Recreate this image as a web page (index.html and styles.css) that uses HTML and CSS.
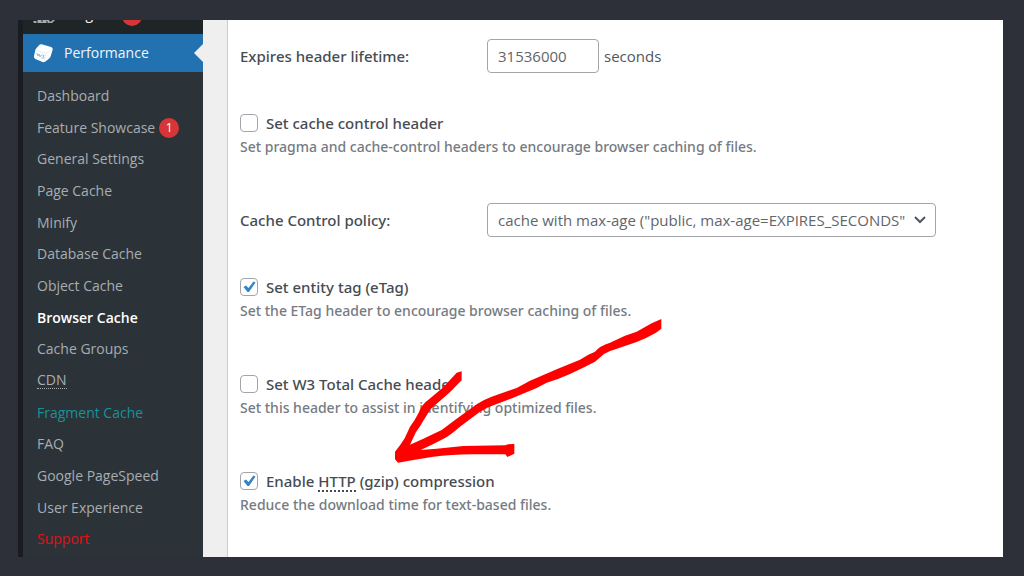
FILE: index.html
```html
<!DOCTYPE html>
<html lang="en">
<head>
  <meta charset="UTF-8">
  <meta name="viewport" content="width=device-width, initial-scale=1.0">
  <title>Browser Cache</title>
  <link rel="stylesheet" href="styles.css">
</head>
<body>
  <div class="frame">
    <nav class="sidebar">
      <a href="#" class="menu-top menu-plugins">
        <svg class="plugin-icon" viewBox="0 0 22 4" aria-hidden="true">
          <path d="M0 1h4l1-1h11l1 2 3-2 2 0-3 3H1z" fill="#a7aaad"/>
          <path d="M3 2h2M8 1h2M13 2h2" stroke="#202427" stroke-width="1"/>
        </svg>
        <span class="menu-name">Plugins</span>
        <span class="count"></span>
      </a>
      <a href="#" class="menu-top menu-current">
        <svg class="cube-icon" viewBox="0 0 22 22" aria-hidden="true">
          <path d="M6.500 2.200Q7.500 1 9 1.300L19 4.200Q21 5 20.600 7L18.500 14Q18 15.500 17 16.300L13 19.500Q11.500 20.600 10 20L2.500 16.800Q.6 16 1 14L2.400 7.500Q2.600 6.500 3.300 5.700z" fill="#fff"/>
          <path d="M3 7.300L13.500 11.200L20 6.500M13.500 11.200L11.800 19.500" fill="none" stroke="#e6edf3" stroke-width="1"/>
          <path d="M4 10.500l1 3 1.400-2 1 3 1.500-2M9.800 12.500l1.800.8-1.200 1.200 1 .6-.8 1-1.700-.5" fill="none" stroke="#7fb2d8" stroke-width="1"/>
        </svg>
        <span class="menu-name">Performance</span>
      </a>
      <ul class="submenu">
        <li><a href="#">Dashboard</a></li>
        <li><a href="#">Feature Showcase</a><span class="count">1</span></li>
        <li><a href="#">General Settings</a></li>
        <li><a href="#">Page Cache</a></li>
        <li><a href="#">Minify</a></li>
        <li><a href="#">Database Cache</a></li>
        <li><a href="#">Object Cache</a></li>
        <li><a href="#" class="current">Browser Cache</a></li>
        <li><a href="#">Cache Groups</a></li>
        <li><a href="#"><abbr>CDN</abbr></a></li>
        <li><a href="#" class="fragment">Fragment Cache</a></li>
        <li><a href="#">FAQ</a></li>
        <li><a href="#">Google PageSpeed</a></li>
        <li><a href="#">User Experience</a></li>
        <li><a href="#" class="support">Support</a></li>
      </ul>
    </nav>

    <main class="content">
      <form class="panel">
        <div class="field">
          <label for="lifetime">Expires header lifetime:</label>
          <div class="control">
            <input type="text" id="lifetime" value="31536000">
            <span>seconds</span>
          </div>
        </div>

        <div class="option">
          <label><input type="checkbox"> <span>Set cache control header</span></label>
          <p>Set pragma and cache-control headers to encourage browser caching of files.</p>
        </div>

        <div class="field">
          <label for="policy">Cache Control policy:</label>
          <div class="control">
            <select id="policy">
              <option>cache with max-age ("public, max-age=EXPIRES_SECONDS")</option>
            </select>
          </div>
        </div>

        <div class="option">
          <label><input type="checkbox" checked> <span>Set entity tag (eTag)</span></label>
          <p>Set the ETag header to encourage browser caching of files.</p>
        </div>

        <div class="option">
          <label><input type="checkbox"> <span>Set W3 Total Cache header</span></label>
          <p>Set this header to assist in identifying optimized files.</p>
        </div>

        <div class="option">
          <label><input type="checkbox" checked> <span>Enable <abbr>HTTP</abbr> (gzip) compression</span></label>
          <p>Reduce the download time for text-based files.</p>
        </div>

        <!-- hand drawn arrow over the options -->
        <svg class="arrow" viewBox="0 0 900 540" aria-hidden="true">
          <path d="M844 57L844 86L828 98Q800 114 770 126L715 145Q690 152 672 162L645 185Q610 203 570 222Q535 238 500 248L470 264Q430 281 400 293L325 322Q300 334 280 350L240 380Q215 402 195 414Q160 433 122 450L170 446L250 438L376 436Q384 431 403 432L403 461L382 471L376 463L280 463Q210 464 160 470L100 480L54 488L45 478L45 455Q60 438 74 415L90 380Q104 362 116 338Q126 312 148 297L190 262L230 218L245 214L245 241L208 278L152 327L130 362Q120 380 108 396L90 434L130 416L185 390L230 356L290 313Q310 299 335 290L410 264L450 242L485 227L530 208L600 179L625 164L645 155Q660 137 690 128L735 107L770 95L815 70Z" fill="#fe0000"/>
        </svg>
      </form>
    </main>
  </div>
</body>
</html>
```
FILE: styles.css
```css
* {
  box-sizing: border-box;
}

body {
  margin: 0;
  background: #2d3038;
  color: #50575e;
  font: 14px/24px "Open Sans", "Noto Sans", sans-serif;
}

.frame {
  display: flex;
  min-height: 100vh;
  padding: 20px 21px 19px 18px;
}

a {
  color: inherit;
  text-decoration: none;
}

abbr {
  border-bottom: 1px dotted currentColor;
}

/* sidebar */
.sidebar {
  display: flex;
  flex-direction: column;
  flex: 0 0 185px;
  border-left: 5px solid #191c20;
  background: #2c3338;
  color: #a7adb1;
}

.menu-top {
  display: flex;
  align-items: center;
  gap: 10px;
  padding-left: 10px;
  color: #f0f6fc;
}

.menu-plugins {
  align-items: flex-end;
  height: 14px;
  overflow: hidden;
  background: #1f2427;
}

.menu-plugins .menu-name,
.menu-plugins .count {
  margin-bottom: 8px;
}

.plugin-icon {
  align-self: flex-start;
  width: 22px;
  height: 4px;
}

.menu-current {
  position: relative;
  height: 38px;
  background: #2271b1;
}

.menu-current::after {
  content: "";
  position: absolute;
  top: 10px;
  right: 0;
  border: 9px solid transparent;
  border-left: 0;
  border-right-color: #efefef;
}

.cube-icon {
  width: 21px;
  height: 21px;
}

.submenu {
  display: flex;
  flex: 1;
  flex-direction: column;
  margin: 0;
  padding: 8px 0 2px 14px;
  list-style: none;
}

.submenu li {
  display: flex;
  flex: 1;
  align-items: center;
  gap: 4px;
}

.submenu abbr {
  display: block;
  line-height: 16px;
}

.submenu .current {
  color: #fff;
  font-weight: 600;
}

.submenu .fragment {
  color: #179297;
}

.submenu .support {
  color: #e30f14;
}

.count {
  width: 20px;
  height: 20px;
  border-radius: 50%;
  background: #d63638;
  color: #fff;
  font-size: 12px;
  line-height: 20px;
  text-align: center;
}

/* settings */
.content {
  flex: 1;
  padding-left: 24px;
  background: #efefef;
}

.panel {
  position: relative;
  display: flex;
  flex-direction: column;
  gap: 38px;
  height: 100%;
  padding: 19px 24px 0 12px;
  border-left: 1px solid #c9cbce;
  background: #fff;
  font-size: 15px;
}

.field {
  display: flex;
  align-items: center;
}

.field > label,
.option label {
  color: #464c53;
  font-family: "Noto Sans", sans-serif;
  font-weight: 500;
}

.field > label {
  flex: 0 0 247px;
}

.option + .field {
  margin-top: 6px;
}

.option + .option {
  margin-top: 11px;
}

.control {
  display: flex;
  align-items: center;
  gap: 5px;
}

.control input,
.control select {
  height: 34px;
  padding: 0 10px;
  border: 1px solid #a3a5aa;
  border-radius: 4px;
  background: #fff;
  color: #5f666c;
  font: inherit;
}

.control input {
  width: 112px;
}

.control select {
  width: 449px;
  padding-right: 30px;
  appearance: none;
  background: #fff url("data:image/svg+xml,%3Csvg xmlns='http://www.w3.org/2000/svg' viewBox='0 0 12 8'%3E%3Cpath d='M1 1l5 5 5-5' fill='none' stroke='%2350575e' stroke-width='2'/%3E%3C/svg%3E") no-repeat right 9px center / 12px 8px;
}

.option label {
  display: flex;
  align-items: center;
  gap: 8px;
}

.option abbr {
  display: inline-block;
  line-height: 18px;
  border-bottom-width: 2px;
}

.option input {
  width: 18px;
  height: 18px;
  margin: 0;
  appearance: none;
  border: 1px solid #a3a5aa;
  border-radius: 4px;
  background: #fff;
}

.option input:checked {
  background: #fff url("data:image/svg+xml,%3Csvg xmlns='http://www.w3.org/2000/svg' viewBox='0 0 14 14'%3E%3Cpath d='M1.500 7l2.500-1.500 2.500 2.500L11.500 1.500l2 1L7 12H5.500z' fill='%233582c4'/%3E%3C/svg%3E") no-repeat center / 14px 14px;
}

.option p {
  margin: 0;
  color: #757b82;
  font-family: "Noto Sans", sans-serif;
  font-size: 14px;
  font-weight: 500;
}

.arrow {
  position: absolute;
  top: 280px;
  left: 152px;
  width: 300px;
  height: 180px;
  pointer-events: none;
}
```
